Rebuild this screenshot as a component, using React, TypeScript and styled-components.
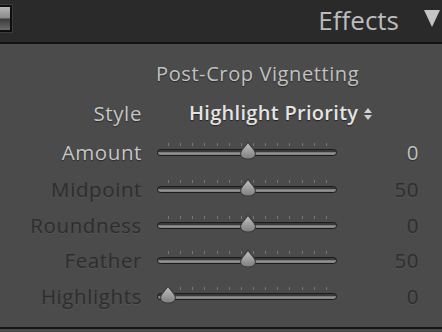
import styled, { createGlobalStyle } from 'styled-components'

const Global = createGlobalStyle`
    html, body {
        margin: 0;
        padding: 0;
        background: #4b4b4b;
        width: 442px;
        height: 332px;
        overflow: hidden;
    }
    body {
        font-family: "Open Sans", "Noto Sans", sans-serif;
    }
`

const Page = styled.div`
    width: 442px;
    height: 332px;
    display: flex;
    flex-direction: column;
    background: #4b4b4b;
`

const Header = styled.div`
    height: 42px;
    flex: none;
    display: flex;
    align-items: center;
    background: #2a2a2a;
    border-bottom: 2px solid #121212;
    padding-right: 2px;
`

const Switch = styled.div`
    width: 16px;
    height: 27px;
    margin-left: -4px;
    margin-top: -6px;
    box-sizing: border-box;
    border: 2px solid #0e0e0e;
    outline: 1px solid #3c3c3c;
    background: linear-gradient(#b5b5b5 0%, #8a8a8a 48%, #3a3a3a 52%, #6a6a6a 100%);
`

const HeaderTitle = styled.div`
    margin-left: auto;
    font-size: 26px;
    color: #bcbcbc;
    margin-top: -3px;
`

const Caret = styled.div`
    width: 0;
    height: 0;
    margin-left: 25px;
    margin-top: -6px;
    border-left: 8px solid transparent;
    border-right: 8px solid transparent;
    border-top: 17px solid #c4c4c4;
`

const Panel = styled.div`
    flex: 1;
    display: grid;
    grid-template-columns: 142px 180px 67px;
    grid-template-rows: 40px 39px 39px repeat(4, 35.8px);
    column-gap: 15px;
    align-items: center;
    padding-top: 9px;
    border-bottom: 2px solid #161616;
    margin-bottom: 3px;
`

const Title = styled.div`
    grid-column: 2 / 4;
    margin-left: -1px;
    font-size: 20px;
    letter-spacing: 0.6px;
    color: #c2c2c2;
    text-shadow: 0 1px 1px #2a2a2a;
`

const Label = styled.div<{ $dim?: boolean }>`
    text-align: right;
    font-size: 20.5px;
    letter-spacing: 0.6px;
    color: ${p => (p.$dim ? '#2d2d2d' : '#c6c6c6')};
    text-shadow: ${p => (p.$dim ? '0 1px 0 #545454' : '0 1px 1px #2a2a2a')};
`

const StyleValue = styled.div`
    grid-column: 2 / 4;
    margin-left: 32px;
    display: flex;
    align-items: center;
    gap: 6px;
    font-size: 20px;
    letter-spacing: 0.3px;
    font-weight: 600;
    color: #e4e4e4;
    text-shadow: 0 1px 1px #222;
`

const Arrows = styled.div`
    display: flex;
    flex-direction: column;
    gap: 2px;
    margin-top: 2px;
    span {
        width: 0;
        height: 0;
        border-left: 4px solid transparent;
        border-right: 4px solid transparent;
    }
    span:first-child { border-bottom: 5px solid #cfcfcf; }
    span:last-child { border-top: 5px solid #cfcfcf; }
`

const SliderBox = styled.div`
    position: relative;
    height: 20px;
`

const Ticks = styled.div`
    position: absolute;
    left: 11px;
    right: 10px;
    top: 1px;
    display: flex;
    justify-content: space-between;
    span {
        width: 1px;
        height: 3px;
        background: #777;
    }
`

const Track = styled.div`
    position: absolute;
    left: 0;
    right: 0;
    top: 7px;
    height: 7px;
    box-sizing: border-box;
    border-radius: 4px;
    border: 1.5px solid #1c1c1c;
    background: linear-gradient(#3a3a3a 0%, #3a3a3a 30%, #9a9a9a 60%, #7c7c7c 100%);
`

const Thumb = styled.svg`
    position: absolute;
    top: -1px;
    width: 17px;
    height: 19px;
    transform: translateX(-8.5px);
`

const Value = styled.div<{ $dim?: boolean }>`
    text-align: right;
    font-size: 20.5px;
    letter-spacing: 0.5px;
    color: ${p => (p.$dim ? '#2e2e2e' : '#c0c0c0')};
    text-shadow: ${p => (p.$dim ? '0 1px 0 #545454' : '0 1px 1px #2a2a2a')};
`

interface ISlider {
    pos: number
}

const Slider = ({ pos }: ISlider) => (
    <SliderBox>
        <Ticks>
            {Array.from({ length: 14 }).map((_, i) => <span key={i} />)}
        </Ticks>
        <Track />
        <Thumb style={{ left: `${pos}px` }} viewBox="0 0 16 18">
            <defs>
                <linearGradient id="tg" x1="0" y1="0" x2="0" y2="1">
                    <stop offset="0" stopColor="#c4c4c4" />
                    <stop offset="1" stopColor="#7e7e7e" />
                </linearGradient>
            </defs>
            <path
                d="M8 1 C9 4, 15 8, 15 12 C15 15.5, 12 17, 8 17 C4 17, 1 15.5, 1 12 C1 8, 7 4, 8 1Z"
                fill="url(#tg)"
                stroke="#3a3a3a"
                strokeWidth="1"
            />
        </Thumb>
    </SliderBox>
)

const rows = [
    { name: 'Amount', value: '0', pos: 91, dim: false },
    { name: 'Midpoint', value: '50', pos: 91, dim: true },
    { name: 'Roundness', value: '0', pos: 91, dim: true },
    { name: 'Feather', value: '50', pos: 91, dim: true },
    { name: 'Highlights', value: '0', pos: 11, dim: true },
]

const App = () => (
    <Page>
        <Global />
        <Header>
            <Switch />
            <HeaderTitle>Effects</HeaderTitle>
            <Caret />
        </Header>
        <Panel>
            <Title>Post-Crop Vignetting</Title>
            <Label>Style</Label>
            <StyleValue>
                Highlight Priority
                <Arrows><span /><span /></Arrows>
            </StyleValue>
            {rows.map(r => (
                <>
                    <Label key={r.name} $dim={r.dim}>{r.name}</Label>
                    <Slider pos={r.pos} />
                    <Value $dim={r.dim}>{r.value}</Value>
                </>
            ))}
        </Panel>
    </Page>
)

export default App
